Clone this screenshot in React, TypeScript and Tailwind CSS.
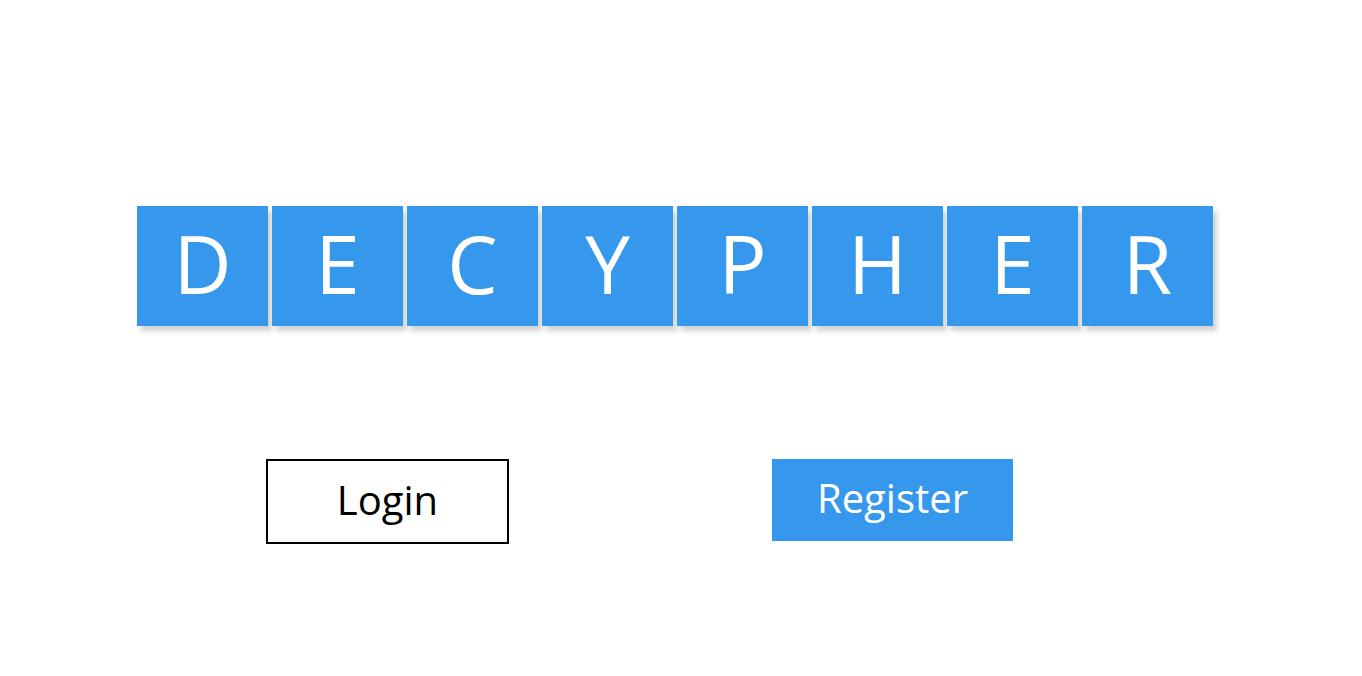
export default function App() {
  const letters = ["D", "E", "C", "Y", "P", "H", "E", "R"];

  return (
    <div
      className="min-h-[676px] w-full bg-white"
      style={{ fontFamily: "'Open Sans', 'Liberation Sans', sans-serif" }}
    >
      {/* Title tiles */}
      <div className="flex gap-[4px] pl-[137px] pt-[206px]">
        {letters.map((l, i) => (
          <div
            key={i}
            className="flex h-[120px] w-[131px] items-center justify-center bg-[#3598ec] pb-[6px] text-[80px] leading-none text-white shadow-[4px_5px_5px_rgba(0,0,0,0.18)]"
          >
            {l}
          </div>
        ))}
      </div>

      {/* Actions */}
      <div className="mt-[133px] flex items-start pl-[266px]">
        <button className="flex h-[85px] w-[243px] items-center justify-center border-2 border-black bg-white pb-[4px] text-[40px] text-black">
          Login
        </button>
        <button className="ml-[263px] flex h-[82px] w-[241px] items-center justify-center bg-[#3598ec] pb-[4px] text-[40px] text-white">
          Register
        </button>
      </div>
    </div>
  );
}
